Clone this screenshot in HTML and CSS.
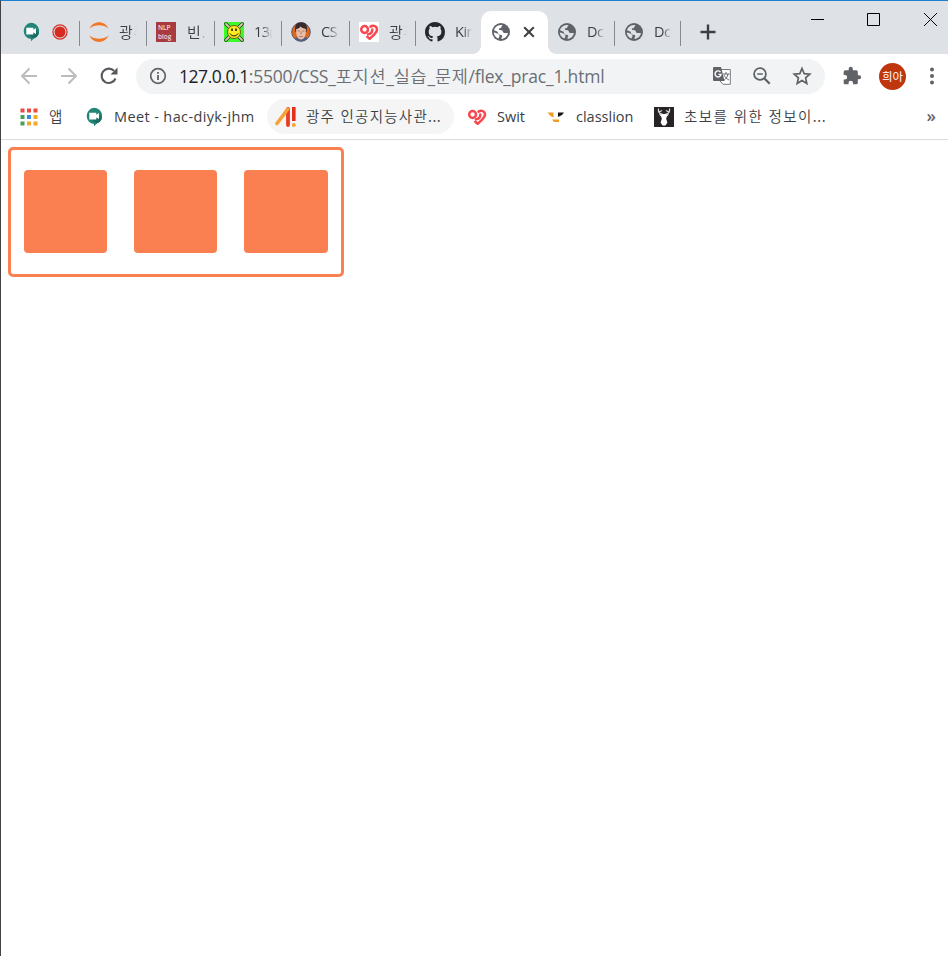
FILE: index.html
```html
<!DOCTYPE html>
<html lang="ko">
<head>
<meta charset="utf-8">
<title>Document</title>
<link rel="stylesheet" href="styles.css">
</head>
<body>
<svg class="defs" aria-hidden="true">
  <symbol id="meet" viewBox="0 0 20 20"><path fill="#238576" d="M10 .8a8.200 8.200 0 0 1 2.500 16L10 19.300v-2.200A8.200 8.200 0 0 1 10 .8z"/><path fill="#1a6d64" d="m15 7 2.800 5a8 8 0 0 1-5 4.400L7 12z"/><path fill="#fff" d="M5.300 5.800h7v2l2.700-1.700v6l-2.700-1.600v2h-7z"/></symbol>
  <symbol id="globe" viewBox="0 0 20 20"><circle cx="10" cy="10" r="9" fill="#5f6368"/><path fill="var(--land)" d="M3 8.200c.7-2.600 3.300-5 6.500-5.200.8 0 1.700 0 2 .2l-1 1.300c-.4 1-.3 1.800-1.500 1.700-1 0-1.400.5-1 1.500.8.6 2 .2 3 .6 1 .5.6 1.800 1.500 2.400 1 .6 2.800.2 4.400.4-.2 1.700-1 3.200-2.200 4.200-1 .8-2.500 1.500-4 1.700-.6-1 0-1.600.6-2.400.2-1-.5-1.800-1.700-1.900-1.300 0-2-.2-2.400-1.300-.3-.8-.2-1.500-1-2z"/><path fill="var(--land)" d="M2.800 10.500c2 .5 3.700.6 4.600 1.800.7.8 1.800 1.600.7 2.700-.5.6-.5 1-.5 1.600a7.200 7.200 0 0 1-4.800-6.100z"/></symbol>
  <symbol id="swit" viewBox="0 0 20 20"><g fill="none" stroke="#f9474f" stroke-width="2.500" stroke-linecap="round" stroke-linejoin="round"><circle cx="5.600" cy="7.500" r="3.400"/><path d="M11.500 4.600c3.200-2.200 7 .1 6.400 3.600-.5 3-4 5.400-7.200 8.600L8.300 14.700M13.300 7.500c0 3.200-2 4.500-4.300 4.800"/></g></symbol>
</svg>
<div class="window">
  <header class="tabs">
    <div class="tab first"><svg class="icon meet"><use href="#meet"/></svg><svg class="rec" viewBox="0 0 16 16"><circle cx="8" cy="8" r="7.100" fill="none" stroke="#d93025" stroke-width="1.200"/><circle cx="8" cy="8" r="5.500" fill="#d62b20"/></svg></div>
    <div class="tab"><svg class="icon" viewBox="0 0 20 20"><path fill="#f37726" d="M.5 6.500C4-2 16-2 19.500 6.500 14 2.200 6 2.200.5 6.500zM.5 13.500c5.500 4.300 13.500 4.300 19 0C16 22 4 22 .5 13.500z"/></svg><span class="title ko">광<i>주</i></span></div>
    <div class="tab"><span class="icon nlp"><b>NLP</b><b>blog</b></span><span class="title ko late">빈.</span></div>
    <div class="tab"><svg class="icon" viewBox="0 0 20 20"><path fill="#3dfa2c" d="M0 0h20v20H0z"/><path d="m2 2 16 16M18 2 2 18" stroke="#333" stroke-width="3.500" stroke-linecap="round"/><path d="m2 2 16 16M18 2 2 18" stroke="#d9cba2" stroke-width="1.800" stroke-linecap="round"/><circle cx="10" cy="10" r="6.500" fill="#ffeb22" stroke="#666300"/><path d="M8 6.500v2.500m4-2.500V9" stroke="#111" stroke-width="1.500"/><path d="M6 11.500c1.600 3.200 6.400 3.200 8 0" fill="none" stroke="#111"/></svg><span class="title">13(</span></div>
    <div class="tab"><svg class="icon" viewBox="0 0 20 20"><circle cx="10" cy="10" r="9.300" fill="#df681c" stroke="#354c78" stroke-width=".8"/><path fill="#53617e" d="M3 16.500 8 14h4l5 2.500a10 10 0 0 1-14 0z"/><path fill="#392b2b" d="M4.500 10C3 3 6 0 10.500.3 15.500.5 17 4 15.500 10z"/><path fill="#e7bea9" d="M5.200 7c2 0 3.300-1 4.300-2.500 1.500 1.500 3.500 2 5.300 2.500.5 6-1.300 10.500-4.800 10.500S4.700 13 5.200 7z"/><path d="M6.800 9h2m2.600 0h2M10 9.500v2.700m-1.800 2.300h3.600" stroke="#9e6259" stroke-width=".8"/></svg><span class="title">CS</span></div>
    <div class="tab"><svg class="icon swit-bg"><use href="#swit"/></svg><span class="title ko">광<i>주</i></span></div>
    <div class="tab last-left"><svg class="icon" viewBox="0 0 16 16"><path fill="#24292e" d="M8 0C3.580 0 0 3.580 0 8c0 3.540 2.290 6.530 5.470 7.590.4.070.55-.17.55-.38v-1.490c-2.010.37-2.530-.49-2.690-.94-.09-.23-.48-.94-.82-1.130-.28-.15-.68-.52-.01-.53.63-.01 1.080.58 1.230.82.72 1.210 1.870.87 2.330.66.070-.52.28-.87.51-1.070-1.780-.2-3.640-.89-3.640-3.950 0-.87.31-1.590.82-2.150-.08-.2-.36-1.020.08-2.120 0 0 .67-.21 2.200.82a7.600 7.600 0 0 1 4 0c1.530-1.040 2.200-.82 2.200-.82.44 1.100.16 1.920.08 2.120.51.56.82 1.270.82 2.150 0 3.070-1.870 3.750-3.650 3.950.29.25.54.73.54 1.480v2.200c0 .21.15.46.55.38A8 8 0 0 0 16 8c0-4.420-3.580-8-8-8z"/></svg><span class="title">Kir</span></div>
    <div class="tab active"><svg class="icon"><use href="#globe"/></svg><svg class="close" viewBox="0 0 12 12"><path d="m1.200 1.200 9.600 9.600m0-9.600-9.600 9.600" stroke="#3c4043" stroke-width="2"/></svg></div>
    <div class="tab"><svg class="icon"><use href="#globe"/></svg><span class="title">Dc</span></div>
    <div class="tab"><svg class="icon"><use href="#globe"/></svg><span class="title">Dc</span></div>
    <div class="strip-end"><svg class="plus" viewBox="0 0 16 16"><path d="M8 .5v15M.5 8h15" stroke="#3c4043" stroke-width="2.400"/></svg>
      <div class="controls"><svg viewBox="0 0 13 13"><path d="M0 6.500h13" stroke="#000"/></svg><svg viewBox="0 0 13 13"><path d="M.5.500h12v12H.5z" fill="none" stroke="#000"/></svg><svg viewBox="0 0 13 13"><path d="m0 0 13 13M13 0 0 13" stroke="#000"/></svg></div>
    </div>
  </header>
  <nav class="toolbar">
    <svg class="nav" viewBox="0 0 20 20"><path d="M18 10H3m7.500-7.500L3 10l7.500 7.500" fill="none" stroke="#babcbe" stroke-width="2"/></svg>
    <svg class="nav" viewBox="0 0 20 20"><path d="M2 10h15M9.500 2.500 17 10l-7.500 7.500" fill="none" stroke="#babcbe" stroke-width="2"/></svg>
    <svg class="nav" viewBox="0 0 20 20"><path d="M16.500 12.500A7.200 7.200 0 1 1 15 4.800" fill="none" stroke="#55595e" stroke-width="2.100"/><path d="M18.500 1.500v7h-7z" fill="#55595e"/></svg>
    <div class="address">
      <svg class="info" viewBox="0 0 18 18"><circle cx="9" cy="9" r="7.300" fill="none" stroke="#5f6368" stroke-width="1.700"/><path d="M9 8v5M9 5v1.800" stroke="#5f6368" stroke-width="1.800"/></svg>
      <span class="url"><span class="host">127.0.0.1</span><span class="path">:5500/CSS_<span class="ko">포지션</span>_<span class="ko">실습</span>_<span class="ko">문제</span>/flex_prac_1.html</span></span>
      <svg class="action" viewBox="0 0 20 20"><path d="M9 3.500h9.300v14.800H11L8 15" fill="#fff" stroke="#777b80" stroke-width="1"/><path d="M10.500 8h7M14 6v2m2 0c-.5 3-2 5-4.500 6.500M12 9c1 2 2.500 4 5 5" fill="none" stroke="#65696e"/><path d="M2 1h7l3.500 14H2a1 1 0 0 1-1-1V2a1 1 0 0 1 1-1z" fill="#5f6368"/><path d="M8.500 6.200A3 3 0 1 0 9 8.400H6.500" fill="none" stroke="#fff" stroke-width="1.400"/></svg>
      <svg class="action" viewBox="0 0 20 20"><circle cx="8" cy="8" r="5.900" fill="none" stroke="#5f6368" stroke-width="1.800"/><path d="M5.200 8h5.600" stroke="#5f6368" stroke-width="1.500"/><path d="m12.200 12.200 5.500 5.500" stroke="#5f6368" stroke-width="2.300"/></svg>
      <svg class="action" viewBox="0 0 20 20"><path d="m10 2.500 2.200 5.200 5.600.5-4.200 3.700 1.200 5.500-4.800-2.900-4.800 2.900 1.200-5.500-4.200-3.700 5.600-.5z" fill="none" stroke="#5f6368" stroke-width="1.700"/></svg>
    </div>
    <svg class="puzzle" viewBox="0 0 24 24"><path fill="#5f6368" d="M20.500 11H19V7a2 2 0 0 0-2-2h-4V3.500a2.500 2.500 0 0 0-5 0V5H4a2 2 0 0 0-2 2v3.800h1.500a2.700 2.700 0 0 1 0 5.400H2V20c0 1.100.9 2 2 2h3.800v-1.500a2.700 2.700 0 0 1 5.400 0V22H17a2 2 0 0 0 2-2v-4h1.500a2.500 2.500 0 0 0 0-5z"/></svg>
    <span class="avatar">희아</span>
    <svg class="more" viewBox="0 0 4 18"><g fill="#5f6368"><circle cx="2" cy="2.500" r="2"/><circle cx="2" cy="9" r="2"/><circle cx="2" cy="15.500" r="2"/></g></svg>
  </nav>
  <nav class="bookmarks">
    <div class="mark apps"><svg class="icon" viewBox="0 0 20 20"><path fill="#ed4a40" d="M1.500 1.500h4v4h-4zm6.500 0h4v4H8zm6.500 0h4v4h-4z"/><path fill="#469f5b" d="M1.500 8h4v4h-4zm0 6.500h4v4h-4z"/><path fill="#378bf1" d="M8 8h4v4H8z"/><path fill="#f4a92d" d="M14.500 8h4v4h-4zM8 14.500h4v4H8zm6.500 0h4v4h-4z"/></svg><span class="ko">앱</span></div>
    <div class="mark meet-mark"><svg class="icon"><use href="#meet"/></svg><span class="label-meet">Meet - hac-diyk-jhm</span></div>
    <div class="mark hover"><svg class="icon ai" viewBox="0 0 22 20"><path d="M13 2v16" stroke="#e93e24" stroke-width="3.800" stroke-linecap="round"/><path d="M2 16.500 12.500 2.500" stroke="#f7a236" stroke-width="3.600" stroke-linecap="round"/><path d="M18.800 0v14" stroke="#e52e1b" stroke-width="3.600"/><circle cx="18.800" cy="18" r="2" fill="#f7a236"/></svg><span class="ko label-ai">광주 인공지능사관<span class="dots">...</span></span></div>
    <div class="mark swit-mark"><svg class="icon"><use href="#swit"/></svg><span>Swit</span></div>
    <div class="mark lion"><svg class="icon" viewBox="0 0 20 20"><path fill="#f19b25" d="M1.500 5.500h6v5L4.500 9zM6 12.500h7V15H8z"/><path fill="#151515" d="M12 5.500h6L16 8l-4 2z"/></svg><span>classlion</span></div>
    <div class="mark deer"><svg class="icon" viewBox="0 0 20 20"><path fill="#282425" d="M0 0h20v20H0z"/><path d="M8.500 7C5 7 4 4.500 4.500 1.500M5 5 8 3.500M11.500 7C15 7 16 4.500 15.500 1.500M15 5l-3-1.500" fill="none" stroke="#ddd" stroke-width="1.200"/><path fill="#fff" d="M5 7.500 9 7h2l4 .5-2.300 2.300-.5 2.200 1.200 3.500-1.900 3h-3l-1.900-3L7.800 12l-.5-2.200z"/></svg><span class="ko label-deer">초보를 위한 정보이<span class="dots">...</span></span></div>
    <span class="overflow">»</span>
  </nav>
  <main class="page">
    <div class="container"><div class="item"></div><div class="item"></div><div class="item"></div></div>
  </main>
</div>
</body>
</html>
```
FILE: styles.css
```css
* { box-sizing: border-box; }
body {
  margin: 0;
  background: #fff;
  font: 15px "Open Sans", "Noto Sans CJK KR", sans-serif;
  color: #3c4043;
}
svg { display: block; flex: none; }
.defs { position: absolute; width: 0; height: 0; }
.ko { font-family: "Noto Sans CJK KR", sans-serif; font-weight: 350; }
.window {
  height: 956px;
  border-top: 1px solid #2080d0;
  border-left: 1px solid #444446;
  overflow: hidden;
}
.icon { width: 20px; height: 20px; flex: none; }

.tabs {
  display: grid;
  grid-template-columns: 79px 67px 68px 67px 68px 66px 65px 67px 67px 66px 1fr;
  height: 53px;
  padding-top: 10px;
  background: #dee1e6;
  --land: #dee1e6;
}
.tab {
  position: relative;
  display: flex;
  align-items: center;
  height: 43px;
  padding: 0 9px 1px;
  gap: 10px;
}
.tab::after {
  content: "";
  position: absolute;
  right: 0;
  top: 10px;
  width: 1px;
  height: 25px;
  background: #86898d;
}
.tab.last-left::after, .tab.active::after { display: none; }
.first { padding-left: 20px; gap: 11px; }
.rec { width: 16px; height: 16px; }
.title {
  width: 18px;
  overflow: hidden;
  white-space: nowrap;
  font-size: 14.5px;
  line-height: 22px;
  letter-spacing: -.5px;
  margin-top: -1px;
  -webkit-mask-image: linear-gradient(90deg, #000 45%, transparent);
  mask-image: linear-gradient(90deg, #000 45%, transparent);
}
.title i { font-style: normal; opacity: .5; }
.title.ko { font-size: 15px; letter-spacing: 1px; -webkit-mask-image: linear-gradient(90deg, #000 75%, transparent); mask-image: linear-gradient(90deg, #000 75%, transparent); }
.late { margin-left: 1px; }
.nlp {
  display: flex;
  flex-direction: column;
  justify-content: center;
  padding-left: 2px;
  background: #a83b40;
  color: #f5dcdc;
}
.nlp b { font: 600 6.5px/9px "Open Sans", sans-serif; }
.swit-bg { background: #fff; }
.active {
  background: #fff;
  border-radius: 10px 10px 0 0;
  padding-left: 10px;
  gap: 12px;
  --land: #fff;
}
.active::before {
  content: "";
  position: absolute;
  left: -8px;
  right: -8px;
  bottom: 0;
  height: 8px;
  background:
    radial-gradient(circle at 0 0, transparent 7.5px, #fff 8px) left / 8px 8px no-repeat,
    radial-gradient(circle at 100% 0, transparent 7.5px, #fff 8px) right / 8px 8px no-repeat;
}
.close { width: 12px; height: 12px; }
.strip-end { display: flex; justify-content: space-between; padding-left: 19px; }
.plus { width: 16px; height: 16px; margin-top: 13px; }
.controls { display: flex; gap: 44px; padding: 2px 11px 0 0; }
.controls svg { width: 13px; height: 13px; }
.controls svg:first-child { margin-right: -1px; }

.toolbar { display: flex; align-items: center; height: 44px; padding: 0 14px 0 18px; }
.nav { width: 20px; height: 20px; margin-right: 20px; }
.nav:nth-child(3) { margin-right: 17px; }
.address {
  display: flex;
  align-items: center;
  width: 689px;
  height: 35px;
  padding: 0 13px 0 13px;
  border-radius: 18px;
  background: #f1f3f4;
}
.info { width: 18px; height: 18px; margin-right: 12px; }
.url { flex: 1; margin-top: -1px; white-space: nowrap; font-size: 17.5px; letter-spacing: -.2px; color: #6b6f74; }
.url .ko { letter-spacing: .75px; }
.host { color: #202124; letter-spacing: -.45px; }
.action { width: 20px; height: 20px; margin-left: 20px; }
.puzzle { width: 20px; height: 20px; margin-left: 17px; }
.avatar {
  display: grid;
  place-items: center;
  width: 27px;
  height: 27px;
  margin: 0 24px 0 17px;
  border-radius: 50%;
  background: #bf360c;
  color: #fff;
  font: 11.5px "Noto Sans CJK KR", sans-serif;
}
.more { width: 4px; height: 18px; }

.bookmarks {
  display: flex;
  align-items: center;
  height: 42px;
  padding: 0 12px 4px 18px;
  border-bottom: 1px solid #dadce0;
}
.mark { display: flex; align-items: center; height: 35px; gap: 10px; white-space: nowrap; font-size: 14.5px; }
.mark > span { margin-top: -1px; }
.mark > span.ko { margin-top: -2px; }
.apps { width: 65px; }
.meet-mark { width: 183px; }
.label-meet { letter-spacing: .38px; }
.label-ai { letter-spacing: 1.25px; }
.label-deer { letter-spacing: 1.4px; }
.dots { letter-spacing: .5px; }
.hover { width: 187px; padding-left: 8px; gap: 9px; border-radius: 18px; background: #f5f5f5; }
.ai { width: 22px; }
.swit-mark { width: 79px; margin-left: 13px; }
.lion { width: 108px; }
.overflow { margin: -3px 0 0 auto; font-size: 17px; font-weight: 600; color: #5f6368; }

.page { padding: 7px; }
.container {
  display: flex;
  gap: 27px;
  width: 336px;
  height: 130px;
  padding: 20px 13px 0;
  border: 3px solid #fa8052;
  border-radius: 5px;
}
.item { width: 83px; height: 83px; border-radius: 4px; background: #fa8052; }
.item:last-child { width: 84px; }
```
